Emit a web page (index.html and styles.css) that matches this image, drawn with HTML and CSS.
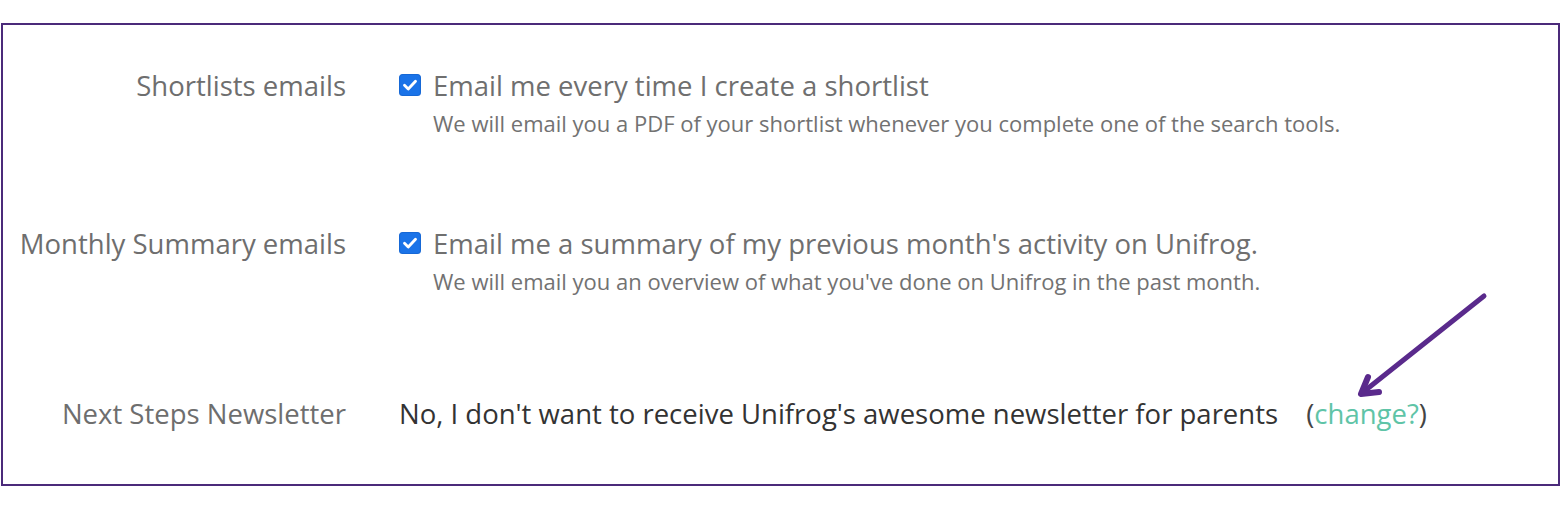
FILE: index.html
```html
<!DOCTYPE html>
<html lang="en">
<head>
<meta charset="utf-8">
<title>Email preferences</title>
<link rel="stylesheet" href="styles.css">
</head>
<body>
<div class="frame">
  <div class="prefs">
    <div class="label row1">Shortlists emails</div>
    <div class="control row1">
      <label class="check-line"><span class="box"><svg viewBox="0 0 20 20" width="22" height="22"><rect x="0.5" y="0.5" width="19" height="19" rx="3" fill="#1a73e8" stroke="#1668d6"/><path d="M5 10.3 L8.4 13.6 L15 6.6" fill="none" stroke="#fff" stroke-width="2.6" stroke-linecap="round" stroke-linejoin="round"/></svg></span>Email me every time I create a shortlist</label>
      <div class="help">We will email you a PDF of your shortlist whenever you complete one of the search tools.</div>
    </div>

    <div class="label row2">Monthly Summary emails</div>
    <div class="control row2">
      <label class="check-line"><span class="box"><svg viewBox="0 0 20 20" width="22" height="22"><rect x="0.5" y="0.5" width="19" height="19" rx="3" fill="#1a73e8" stroke="#1668d6"/><path d="M5 10.3 L8.4 13.6 L15 6.6" fill="none" stroke="#fff" stroke-width="2.6" stroke-linecap="round" stroke-linejoin="round"/></svg></span>Email me a summary of my previous month's activity on Unifrog.</label>
      <div class="help">We will email you an overview of what you've done on Unifrog in the past month.</div>
    </div>

    <div class="label row3">Next Steps Newsletter</div>
    <div class="control row3">
      <div class="news">No, I don't want to receive Unifrog's awesome newsletter for parents <span class="paren">(<a class="change" href="#">change?</a>)</span></div>
    </div>
  </div>
  <svg class="arrow" width="140" height="110" viewBox="0 0 140 110">
    <path d="M128 5 L6 102" stroke="#5a2a8c" stroke-width="5" stroke-linecap="round" fill="none"/>
    <path d="M12 86 L5 103 L23 101" stroke="#5a2a8c" stroke-width="6" stroke-linecap="round" stroke-linejoin="round" fill="none"/>
  </svg>
</div>
</body>
</html>
```

FILE: styles.css
```css
html, body {
  margin: 0;
  padding: 0;
  background: #ffffff;
}
body {
  font-family: "Open Sans", "Noto Sans", sans-serif;
}
.frame {
  position: relative;
  margin: 23px 0 0 1px;
  width: 1555px;
  height: 459px;
  border: 2px solid #4b2a7a;
}
.prefs {
  display: grid;
  grid-template-columns: 343px 1fr;
  column-gap: 53px;
  padding-top: 42px;
}
.label {
  text-align: right;
  color: #6e6e6e;
  font-size: 27.5px;
  line-height: 38px;
}
.control {
  color: #777777;
}
.row2 { margin-top: 87px; }
.row3 { margin-top: 99px; }
.check-line {
  display: flex;
  align-items: center;
  font-size: 27.5px;
  line-height: 38px;
  color: #6f6f6f;
}
.box {
  display: inline-flex;
  width: 22px;
  height: 22px;
  margin-right: 12px;
  margin-top: -3px;
}
.help {
  margin-left: 34px;
  margin-top: 3px;
  font-size: 22px;
  line-height: 30px;
  color: #727272;
}
.news {
  font-size: 27.5px;
  line-height: 38px;
  color: #333333;
}
.paren {
  margin-left: 21px;
  color: #444444;
}
.change {
  color: #5fc4a7;
  text-decoration: none;
}
.arrow {
  position: absolute;
  left: 1353px;
  top: 266px;
}
```
